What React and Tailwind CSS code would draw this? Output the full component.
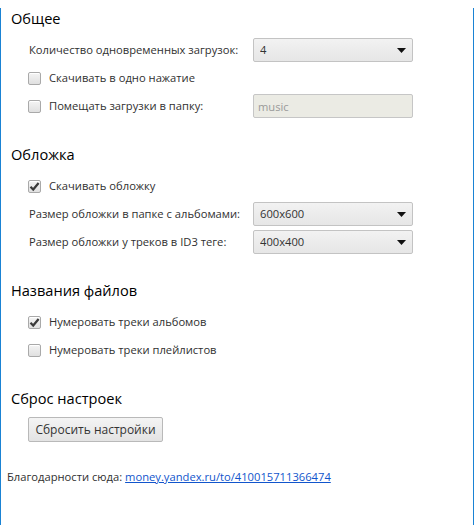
import { useState } from 'react';

function Checkbox({ checked, onChange, label }) {
  return (
    <label className="flex h-[28px] items-center whitespace-nowrap pl-[27px]">
      <span
        onClick={onChange}
        className="flex h-[13px] w-[13px] items-center justify-center rounded-[2px] border border-[#a9a9a9] bg-gradient-to-b from-[#f4f4f4] to-[#e0e0e0] shadow-[inset_0_1px_0_#fff]"
      >
        {checked && (
          <svg width="11" height="11" viewBox="0 0 11 11">
            <path d="M1.5 5.8 L4.2 8.5 L9.6 2" fill="none" stroke="#3a3a3a" strokeWidth="2.2" />
          </svg>
        )}
      </span>
      <span className="ml-[8px] text-[#303030]">{label}</span>
    </label>
  );
}

function Select({ value, options, onChange }) {
  return (
    <div className="relative ml-auto mr-[60px] h-[24px] w-[160px] shrink-0">
      <select
        value={value}
        onChange={e => onChange(e.target.value)}
        className="h-full w-full appearance-none rounded-[2px] border border-[#c3c3c3] bg-gradient-to-b from-[#f2f2f2] to-[#e6e6e6] pl-[6px] text-[11.2px] text-[#333] outline-none"
      >
        {options.map(o => (
          <option key={o} value={o}>{o}</option>
        ))}
      </select>
      <svg className="pointer-events-none absolute right-[7px] top-[10px]" width="9" height="5" viewBox="0 0 9 5">
        <path d="M0 0 H9 L4.5 5 Z" fill="#111" />
      </svg>
    </div>
  );
}

function Row({ label, children }) {
  return (
    <div className="flex h-[28px] items-center whitespace-nowrap pl-[28px]">
      <span className="text-[#303030]">{label}</span>
      {children}
    </div>
  );
}

function Heading({ children, className = '' }) {
  return <h2 className={`h-[20px] pl-[10px] text-[14.6px] leading-[20px] text-black ${className}`}>{children}</h2>;
}

export default function App() {
  const [simult, setSimult] = useState('4');
  const [oneClick, setOneClick] = useState(false);
  const [toFolder, setToFolder] = useState(false);
  const [cover, setCover] = useState(true);
  const [albumSize, setAlbumSize] = useState('600x600');
  const [id3Size, setId3Size] = useState('400x400');
  const [numAlbums, setNumAlbums] = useState(true);
  const [numPlaylists, setNumPlaylists] = useState(false);

  return (
    <div
      className="h-[524px] w-[474px] border-x border-b border-[#1a83d4] bg-white text-[11.2px] leading-[16px]"
      style={{ fontFamily: '"Open Sans", "Noto Sans", sans-serif' }}
    >
      {/* Общее */}
      <Heading className="mt-[8px]">Общее</Heading>
      <div className="mt-[8px]">
        <Row label="Количество одновременных загрузок:">
          <Select value={simult} options={['1', '2', '3', '4', '5']} onChange={setSimult} />
        </Row>
        <Checkbox checked={oneClick} onChange={() => setOneClick(!oneClick)} label="Скачивать в одно нажатие" />
        <div className="flex h-[28px] items-center">
          <Checkbox checked={toFolder} onChange={() => setToFolder(!toFolder)} label="Помещать загрузки в папку:" />
          <input
            disabled={!toFolder}
            placeholder="music"
            className="ml-auto mr-[60px] h-[24px] w-[160px] shrink-0 rounded-[2px] border border-[#c6c6c6] bg-[#ebebe4] px-[4px] text-[11.2px] text-[#555] placeholder-[#9a9a9a] outline-none"
          />
        </div>
      </div>

      {/* Обложка */}
      <Heading className="mt-[24px]">Обложка</Heading>
      <div className="mt-[8px]">
        <Checkbox checked={cover} onChange={() => setCover(!cover)} label="Скачивать обложку" />
        <Row label="Размер обложки в папке с альбомами:">
          <Select value={albumSize} options={['200x200', '400x400', '600x600', '1000x1000']} onChange={setAlbumSize} />
        </Row>
        <Row label="Размер обложки у треков в ID3 теге:">
          <Select value={id3Size} options={['200x200', '400x400', '600x600', '1000x1000']} onChange={setId3Size} />
        </Row>
      </div>

      {/* Названия файлов */}
      <Heading className="mt-[24px]">Названия файлов</Heading>
      <div className="mt-[8px]">
        <Checkbox checked={numAlbums} onChange={() => setNumAlbums(!numAlbums)} label="Нумеровать треки альбомов" />
        <Checkbox checked={numPlaylists} onChange={() => setNumPlaylists(!numPlaylists)} label="Нумеровать треки плейлистов" />
      </div>

      {/* Сброс настроек */}
      <Heading className="mt-[24px]">Сброс настроек</Heading>
      <div className="mt-[9px] pl-[27px]">
        <button className="h-[25px] w-[135px] rounded-[2px] border border-[#b9b9b9] bg-gradient-to-b from-[#f4f4f4] to-[#e3e3e3] text-[12px] text-[#333]">
          Сбросить настройки
        </button>
      </div>

      <p className="mt-[27px] whitespace-nowrap pl-[6px] text-[#303030]">
        Благодарности сюда:{' '}
        <a href="#" className="text-[#1155cc] underline">money.yandex.ru/to/410015711366474</a>
      </p>
    </div>
  );
}
